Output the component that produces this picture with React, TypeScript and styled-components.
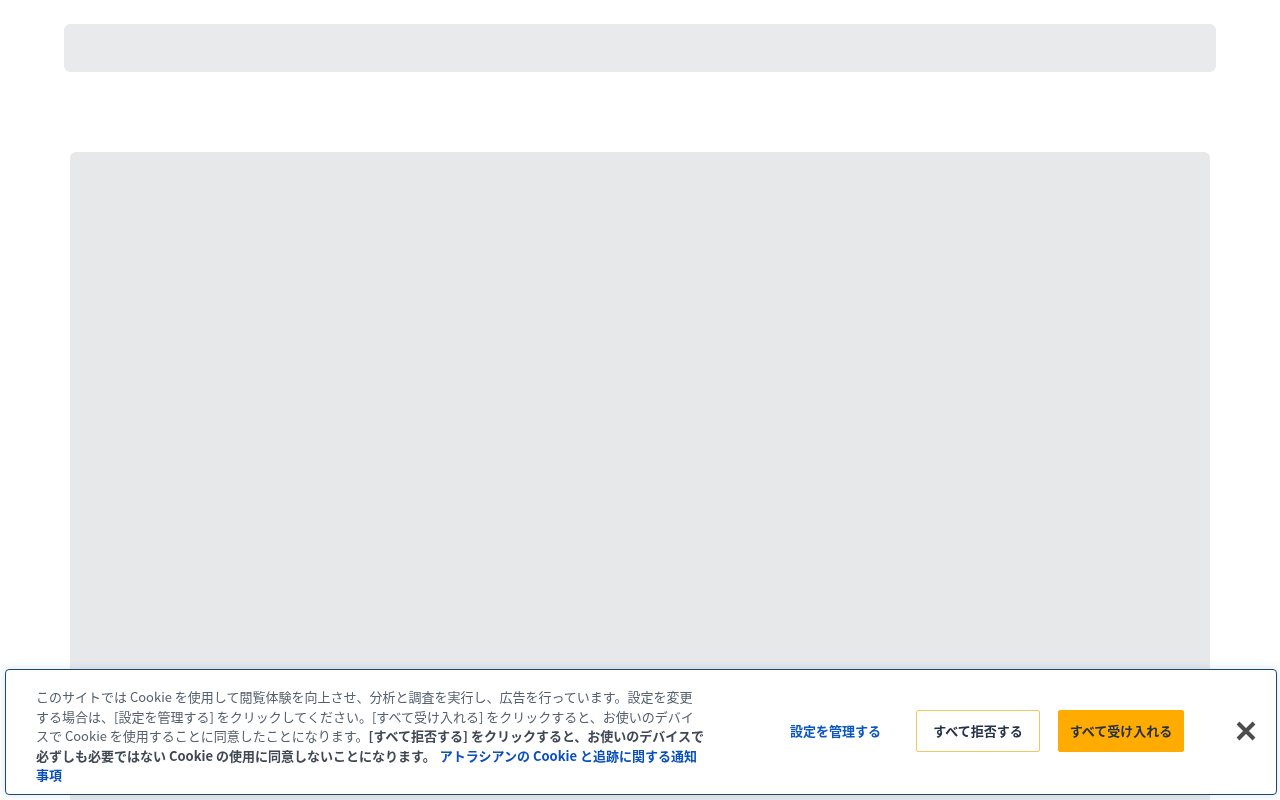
import styled, { createGlobalStyle } from "styled-components";

const GlobalStyle = createGlobalStyle`
  html, body {
    margin: 0;
    padding: 0;
    background: #fff;
    font-family: "Noto Sans CJK JP", "Noto Sans", sans-serif;
  }
`;

const Page = styled.div`
  display: flex;
  flex-direction: column;
  padding-top: 24px;
  height: 800px;
  box-sizing: border-box;
  overflow: hidden;
`;

const TopBar = styled.div`
  flex: none;
  margin-left: 64px;
  width: 1152px;
  height: 48px;
  border-radius: 6px;
  background: #e9eaec;
`;

const MainPanel = styled.div`
  flex: none;
  margin: 80px 0 0 70px;
  width: 1140px;
  height: 700px;
  border-radius: 6px;
  background: #e7e8ea;
`;

const Banner = styled.div`
  position: fixed;
  left: 5px;
  right: 3px;
  bottom: 5px;
  height: 126px;
  box-sizing: border-box;
  background: #fff;
  border: 1px solid #1f4a6b;
  border-radius: 4px;
  box-shadow: 0 0 10px rgba(40, 110, 170, 0.18);
  display: flex;
  align-items: flex-start;
  padding: 17px 18px 0 30px;
`;

const Notice = styled.p`
  margin: 0;
  width: 668px;
  font-size: 13px;
  line-height: 19.5px;
  color: #55606e;
  font-family: "Noto Sans CJK JP", "Noto Sans", sans-serif;

  b {
    font-weight: 700;
    color: #3f4854;
  }
`;

const PolicyLink = styled.a`
  color: #0a4fc0;
  font-weight: 700;
  text-decoration: none;
  margin-left: 4px;
`;

const Actions = styled.div`
  flex: 1;
  display: flex;
  align-items: center;
  align-self: stretch;
  margin-top: -17px;
  padding-bottom: 3px;
`;

const ManageLink = styled.a`
  margin-left: 86px;
  font-size: 13px;
  font-weight: 700;
  color: #0a56c4;
  text-decoration: none;
  white-space: nowrap;
`;

const Button = styled.button<{ primary?: boolean }>`
  height: 42px;
  box-sizing: border-box;
  padding: 0 8px;
  border-radius: 2px;
  font-family: "Noto Sans CJK JP", "Noto Sans", sans-serif;
  font-size: 13px;
  font-weight: 700;
  color: #253247;
  white-space: nowrap;
  cursor: pointer;
  background: ${({ primary }) => (primary ? "#ffab00" : "#fff")};
  border: 1px solid ${({ primary }) => (primary ? "#ffab00" : "#f2c860")};
  margin-left: ${({ primary }) => (primary ? "18px" : "35px")};
  width: ${({ primary }) => (primary ? "126px" : "124px")};
`;

const CloseButton = styled.button`
  margin-left: auto;
  width: 24px;
  height: 24px;
  padding: 0;
  border: none;
  background: none;
  display: flex;
  align-items: center;
  justify-content: center;
  cursor: pointer;
`;

export default function App() {
  return (
    <>
      <GlobalStyle />
      <Page>
        <TopBar />
        <MainPanel />
      </Page>
      <Banner>
        <Notice>
          このサイトでは Cookie を使用して閲覧体験を向上させ、分析と調査を実行し、広告を行っています。設定を変更する場合は、[設定を管理する]
          をクリックしてください。[すべて受け入れる] をクリックすると、お使いのデバイスで Cookie
          を使用することに同意したことになります。
          <b>
            [すべて拒否する] をクリックすると、お使いのデバイスで必ずしも必要ではない Cookie
            の使用に同意しないことになります。
          </b>
          <PolicyLink href="#">アトラシアンの Cookie と追跡に関する通知事項</PolicyLink>
        </Notice>
        <Actions>
          <ManageLink href="#">設定を管理する</ManageLink>
          <Button>すべて拒否する</Button>
          <Button primary>すべて受け入れる</Button>
          <CloseButton aria-label="閉じる">
            <svg width="20" height="20" viewBox="0 0 20 20">
              <path
                d="M2 2 L18 18 M18 2 L2 18"
                stroke="#4d4d4d"
                strokeWidth="4"
                strokeLinecap="butt"
              />
            </svg>
          </CloseButton>
        </Actions>
      </Banner>
    </>
  );
}
